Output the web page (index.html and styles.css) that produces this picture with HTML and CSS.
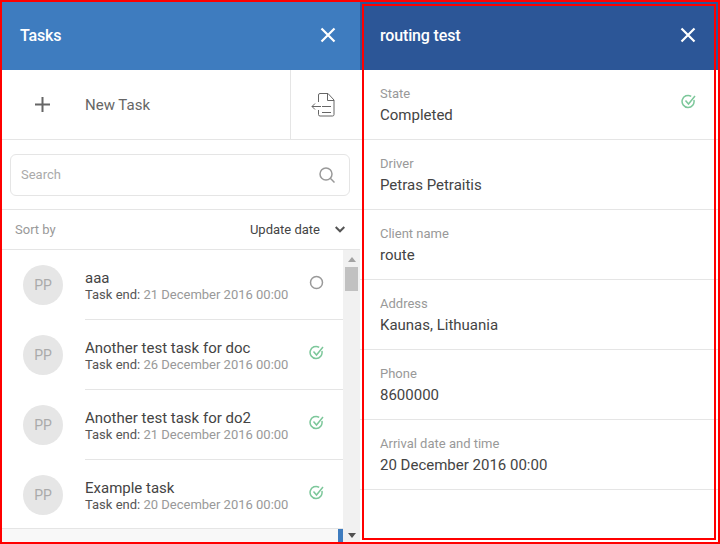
FILE: index.html
```html
<!DOCTYPE html>
<html lang="en">
<head>
  <meta charset="UTF-8">
  <title>Tasks</title>
  <link rel="stylesheet" href="styles.css">
</head>
<body>

  <div class="app">
    <section class="tasks-panel">
      <header class="panel-header tasks-header">
        <h2>Tasks</h2>
        <svg class="close-icon" width="16" height="16" viewBox="0 0 16 16"><path d="M1.500 1.500l13 13M14.500 1.500l-13 13"/></svg>
      </header>

      <div class="actions-row">
        <div class="new-task">
          <svg class="plus-icon" width="15" height="15" viewBox="0 0 15 15"><path d="M7.500 0v15M0 7.500h15"/></svg>
          <span>New Task</span>
        </div>
        <div class="import-btn">
          <svg class="doc-icon" width="24" height="25" viewBox="0 0 24 25"><path d="M7.500 10V3a1.500 1.500 0 0 1 1.500-1.500h8l6 6.500v14.500a1.500 1.500 0 0 1-1.500 1.500H9a1.500 1.500 0 0 1-1.500-1.500V18M16.500 1.500V8.500h6.500M1 14.500h9M4 11.500l-3 3 3 3M11 14.500h9M11 20.500h9"/></svg>
        </div>
      </div>

      <div class="search-row">
        <div class="search-box">
          <span class="search-text">Search</span>
          <svg class="search-icon" width="16" height="16" viewBox="0 0 16 16"><circle cx="7" cy="7" r="6"/><path d="M11.300 11.300l4.200 4.200"/></svg>
        </div>
      </div>

      <div class="sort-row">
        <span class="sort-label">Sort by</span>
        <span class="sort-value">Update date</span>
        <svg class="chevron" width="10" height="7" viewBox="0 0 10 7"><path d="M.7 1l4.300 4.300L9.300 1"/></svg>
      </div>

      <div class="list-area">
        <ul class="task-list">
          <li class="task-item">
            <div class="avatar">PP</div>
            <div class="task-body">
              <div class="task-text">
                <div class="task-name">aaa</div>
                <div class="task-end">Task end: <span>21 December 2016 00:00</span></div>
              </div>
              <svg class="state-icon" width="16" height="16" viewBox="0 0 16 16"><circle class="open" cx="7.500" cy="7.500" r="6"/></svg>
            </div>
          </li>
          <li class="task-item">
            <div class="avatar">PP</div>
            <div class="task-body">
              <div class="task-text">
                <div class="task-name">Another test task for doc</div>
                <div class="task-end">Task end: <span>26 December 2016 00:00</span></div>
              </div>
              <svg class="state-icon" width="16" height="16" viewBox="0 0 16 16"><path class="done" d="M12.900 6a6 6 0 1 1-2.700-3.700M4.500 6.500l3 3.500 6.500-8"/></svg>
            </div>
          </li>
          <li class="task-item">
            <div class="avatar">PP</div>
            <div class="task-body">
              <div class="task-text">
                <div class="task-name">Another test task for do2</div>
                <div class="task-end">Task end: <span>21 December 2016 00:00</span></div>
              </div>
              <svg class="state-icon" width="16" height="16" viewBox="0 0 16 16"><path class="done" d="M12.900 6a6 6 0 1 1-2.700-3.700M4.500 6.500l3 3.500 6.500-8"/></svg>
            </div>
          </li>
          <li class="task-item">
            <div class="avatar">PP</div>
            <div class="task-body">
              <div class="task-text">
                <div class="task-name">Example task</div>
                <div class="task-end">Task end: <span>20 December 2016 00:00</span></div>
              </div>
              <svg class="state-icon" width="16" height="16" viewBox="0 0 16 16"><path class="done" d="M12.900 6a6 6 0 1 1-2.700-3.700M4.500 6.500l3 3.500 6.500-8"/></svg>
            </div>
          </li>
        </ul>
        <div class="scrollbar">
          <div class="arrow-up"></div>
          <div class="thumb"></div>
          <div class="arrow-down"></div>
        </div>
        <div class="list-footer"><div class="blue-tab"></div></div>
      </div>
    </section>

    <section class="details-panel">
      <header class="panel-header details-header">
        <h2>routing test</h2>
        <svg class="close-icon" width="16" height="16" viewBox="0 0 16 16"><path d="M1.500 1.500l13 13M14.500 1.500l-13 13"/></svg>
      </header>
      <div class="detail-row">
        <div>
          <div class="detail-label">State</div>
          <div class="detail-value">Completed</div>
        </div>
        <svg class="state-icon" width="16" height="16" viewBox="0 0 16 16"><path class="done" d="M12.900 6a6 6 0 1 1-2.700-3.700M4.500 6.500l3 3.500 6.500-8"/></svg>
      </div>
      <div class="detail-row">
        <div>
          <div class="detail-label">Driver</div>
          <div class="detail-value">Petras Petraitis</div>
        </div>
      </div>
      <div class="detail-row">
        <div>
          <div class="detail-label">Client name</div>
          <div class="detail-value">route</div>
        </div>
      </div>
      <div class="detail-row">
        <div>
          <div class="detail-label">Address</div>
          <div class="detail-value">Kaunas, Lithuania</div>
        </div>
      </div>
      <div class="detail-row">
        <div>
          <div class="detail-label">Phone</div>
          <div class="detail-value">8600000</div>
        </div>
      </div>
      <div class="detail-row">
        <div>
          <div class="detail-label">Arrival date and time</div>
          <div class="detail-value">20 December 2016 00:00</div>
        </div>
      </div>
    </section>

    <div class="frame-outer"></div>
    <div class="frame-inner"></div>
  </div>

</body>
</html>
```

FILE: styles.css
```css
* {
  margin: 0;
  padding: 0;
  box-sizing: border-box;
}

body {
  font-family: Roboto, 'Liberation Sans', sans-serif;
  background: #fff;
  color: #333;
}

.app {
  position: relative;
  display: flex;
  width: 720px;
  height: 544px;
  overflow: hidden;
}

.tasks-panel {
  width: 360px;
  display: flex;
  flex-direction: column;
}

.details-panel {
  width: 360px;
}

.panel-header {
  height: 70px;
  padding: 0 24px 0 20px;
  display: flex;
  align-items: center;
  justify-content: space-between;
  color: #fff;
}

.panel-header h2 {
  font-size: 16px;
  font-weight: 500;
  letter-spacing: -0.15px;
}

.tasks-header {
  background: #3e7cbf;
}

.details-header {
  background: #2c5697;
}

.close-icon path {
  fill: none;
  stroke: #fff;
  stroke-width: 2.2;
}

.actions-row {
  height: 70px;
  display: flex;
  border-bottom: 1px solid #e5e5e5;
}

.new-task {
  flex: 1;
  display: flex;
  align-items: center;
  padding-left: 35px;
  gap: 35px;
  font-size: 15px;
  color: #666;
}

.plus-icon path {
  fill: none;
  stroke: #666;
  stroke-width: 2;
}

.import-btn {
  width: 70px;
  padding-right: 5px;
  display: flex;
  align-items: center;
  justify-content: center;
  border-left: 1px solid #e5e5e5;
}

.doc-icon path {
  fill: none;
  stroke: #666;
  stroke-width: 1;
}

.search-row {
  height: 70px;
  padding: 14px 10px 0;
  border-bottom: 1px solid #e5e5e5;
}

.search-box {
  height: 42px;
  padding: 0 14px 0 10px;
  display: flex;
  align-items: center;
  justify-content: space-between;
  border: 1px solid #e5e5e5;
  border-radius: 6px;
  font-size: 13px;
  color: #aaa;
}

.search-text {
  margin-bottom: 2px;
}

.search-icon {
  stroke: #999;
  stroke-width: 1.5;
  fill: none;
}

.sort-row {
  height: 40px;
  padding: 0 15px;
  display: flex;
  align-items: center;
  font-size: 13px;
  border-bottom: 1px solid #e5e5e5;
}

.sort-label {
  flex: 1;
  color: #999;
}

.sort-value {
  color: #444;
  margin-right: 15px;
}

.chevron path {
  fill: none;
  stroke: #555;
  stroke-width: 2;
}

.list-area {
  position: relative;
  flex: 1;
  display: grid;
  grid-template-columns: 343px 17px;
  grid-template-rows: 279px 15px;
}

.task-list {
  list-style: none;
  overflow: hidden;
  border-bottom: 1px solid #e5e5e5;
}

.task-item {
  height: 70px;
  padding-left: 23px;
  display: flex;
  align-items: center;
  gap: 22px;
}

.avatar {
  width: 40px;
  height: 40px;
  border-radius: 50%;
  background: #e6e6e6;
  color: #aaa;
  font-size: 14px;
  display: flex;
  align-items: center;
  justify-content: center;
  flex-shrink: 0;
}

.task-body {
  flex: 1;
  height: 70px;
  display: flex;
  align-items: center;
  justify-content: space-between;
  padding-right: 18px;
  border-bottom: 1px solid #e5e5e5;
}

.task-item:last-child .task-body {
  border-bottom-color: transparent;
}

.task-text {
  padding-top: 2px;
}

.task-name {
  font-size: 15px;
  line-height: 18px;
  color: #444;
}

.task-end {
  font-size: 13px;
  line-height: 15px;
  color: #555;
}

.task-end span {
  color: #999;
}

.state-icon {
  flex-shrink: 0;
}

.task-body .state-icon {
  margin-bottom: 4px;
}

.state-icon .open {
  fill: none;
  stroke: #999;
  stroke-width: 1.5;
}

.state-icon .done {
  fill: none;
  stroke: #7cc79a;
  stroke-width: 1.5;
}

.scrollbar {
  grid-row: 1 / 3;
  grid-column: 2;
  background: #f1f1f1;
  padding: 7px 2px 0;
  display: flex;
  flex-direction: column;
}

.arrow-up {
  align-self: center;
  border: 4px solid transparent;
  border-top: 0;
  border-bottom: 5px solid #a3a3a3;
}

.thumb {
  height: 24px;
  margin-top: 5px;
  background: #c1c1c1;
}

.arrow-down {
  align-self: center;
  margin-top: auto;
  margin-bottom: 6px;
  border: 4px solid transparent;
  border-bottom: 0;
  border-top: 5px solid #505050;
}

.list-footer {
  grid-row: 2;
  grid-column: 1;
  background: #f8f8f8;
  display: flex;
  justify-content: flex-end;
}

.blue-tab {
  width: 5px;
  background: #3e7cbf;
}

.detail-row {
  height: 70px;
  padding: 16px 23px 0 20px;
  display: flex;
  justify-content: space-between;
  align-items: flex-start;
  border-bottom: 1px solid #e5e5e5;
}

.detail-row .state-icon {
  margin-top: 8px;
}

.detail-label {
  font-size: 13px;
  line-height: 16px;
  color: #999;
}

.detail-value {
  font-size: 15px;
  line-height: 22px;
  margin-top: 2px;
  color: #444;
}

/* red annotation frames drawn over the screenshot */
.frame-outer,
.frame-inner {
  position: absolute;
  border: 2px solid #f00;
  pointer-events: none;
}

.frame-outer {
  top: 0;
  left: 0;
  width: 720px;
  height: 544px;
}

.frame-inner {
  top: 4px;
  left: 362px;
  width: 354px;
  height: 536px;
}
```
